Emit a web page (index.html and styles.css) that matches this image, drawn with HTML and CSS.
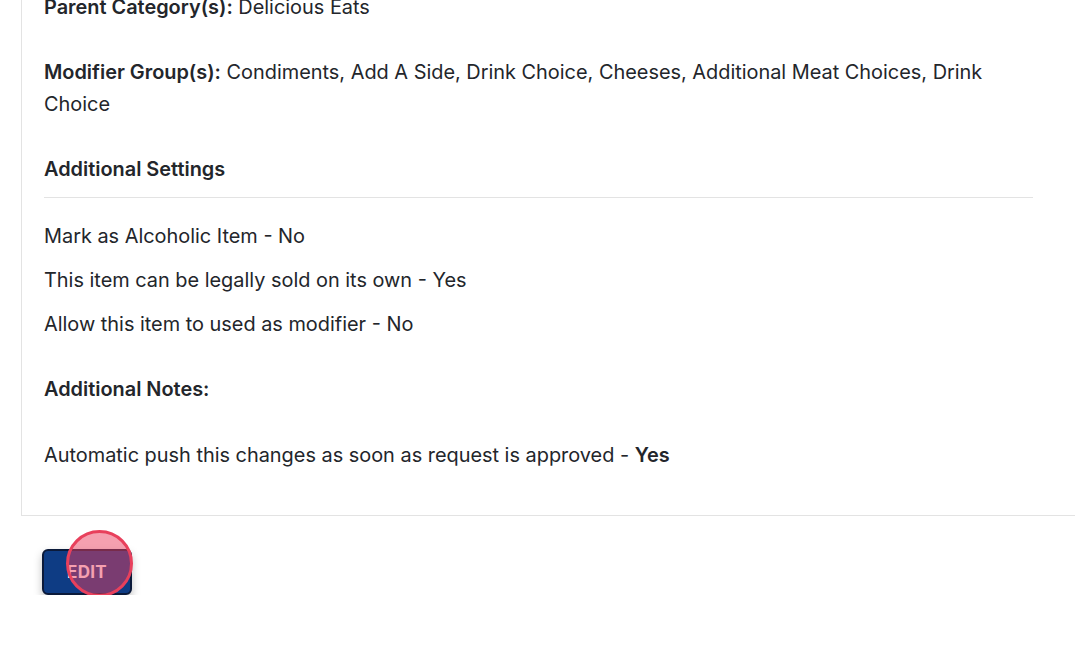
FILE: index.html
```html
<!DOCTYPE html>
<html lang="en">
<head>
  <meta charset="UTF-8" />
  <title>Item Details</title>
  <link rel="stylesheet" href="styles.css">
</head>
<body>

<main class="page">
  <section class="card">
    <p class="row"><strong>Parent Category(s):</strong> Delicious Eats</p>
    <p class="row"><strong>Modifier Group(s):</strong> Condiments, Add A Side, Drink Choice, Cheeses, Additional Meat Choices, Drink Choice</p>

    <h3 class="section-title">Additional Settings</h3>
    <ul class="settings">
      <li>Mark as Alcoholic Item - No</li>
      <li>This item can be legally sold on its own - Yes</li>
      <li>Allow this item to used as modifier - No</li>
    </ul>

    <h3 class="notes-title">Additional Notes:</h3>
    <p class="notes">Automatic push this changes as soon as request is approved - <strong>Yes</strong></p>
  </section>

  <div class="actions">
    <button class="btn-edit" type="button">EDIT</button>
    <span class="click-dot" aria-hidden="true"></span>
  </div>
</main>

</body>
</html>
```

FILE: styles.css
```css
* {
  box-sizing: border-box;
}
body {
  margin: 0;
  font-family: Inter, "Open Sans", Arial, sans-serif;
  background: #fff;
  color: #23262b;
  overflow: hidden;
}

/* Seite ist nach unten gescrollt */
.page {
  margin-top: -29px;
}

/* Karte mit Details */
.card {
  margin-left: 21px;
  border-left: 1px solid #e3e3e3;
  border-bottom: 1px solid #e3e3e3;
  padding: 20px 42px 44px 22px;
  font-size: 19.9px;
  line-height: 32px;
}
.card p {
  margin: 0;
}
.card .row {
  margin-bottom: 33px;
}
.row strong,
.notes strong {
  font-weight: 600;
}

.section-title,
.notes-title {
  font-size: 19.9px;
  font-weight: 600;
  margin: 0;
  line-height: 32px;
}
.section-title {
  padding-bottom: 12px;
  border-bottom: 1px solid #e3e3e3;
}

.settings {
  list-style: none;
  margin: 0;
  padding: 22px 0 0;
}
.settings li {
  margin-bottom: 12px;
}
.settings li:last-child {
  margin-bottom: 0;
}

.notes-title {
  margin-top: 33px;
}
.card .notes {
  margin-top: 34px;
}

/* Button unten */
.actions {
  position: relative;
  padding: 33px 0 0 42px;
}
.btn-edit {
  display: block;
  width: 90px;
  height: 46px;
  background: #0e3c84;
  border: 2px solid #0b1a3a;
  border-radius: 6px;
  color: #fff;
  font-family: inherit;
  font-size: 17px;
  font-weight: 700;
  letter-spacing: 0.3px;
  box-shadow: 0 4px 9px rgba(0, 0, 0, 0.25);
}

/* Klick-Markierung */
.click-dot {
  position: absolute;
  left: 66px;
  top: 14px;
  width: 67px;
  height: 67px;
  border-radius: 50%;
  border: 3px solid #e8405c;
  background: rgba(235, 61, 94, 0.49);
}
```
